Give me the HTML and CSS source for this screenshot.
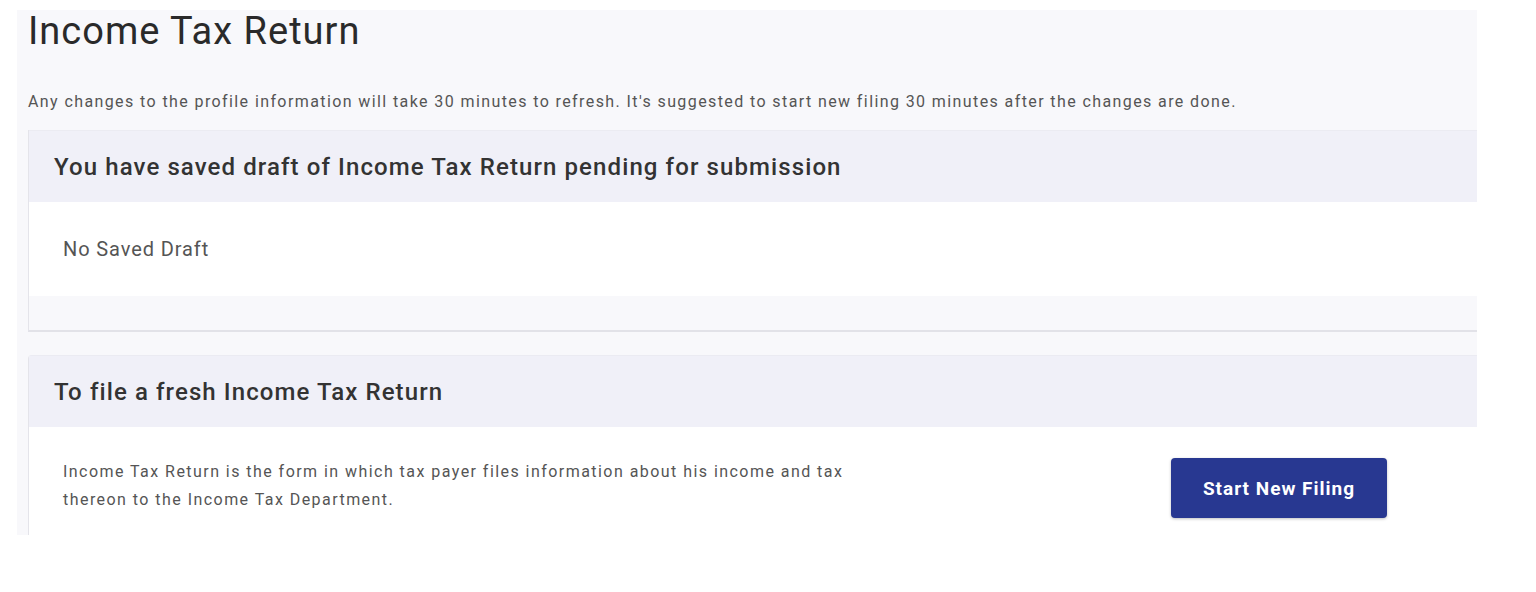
FILE: index.html
```html
<!DOCTYPE html>
<html lang="en">
<head>
<meta charset="utf-8">
<title>Income Tax Return</title>
<link rel="stylesheet" href="styles.css">
</head>
<body>
<div class="page">
  <div class="panel">
    <h1 class="title">Income Tax Return</h1>
    <p class="note">Any changes to the profile information will take 30 minutes to refresh. It's suggested to start new filing 30 minutes after the changes are done.</p>
    <div class="group">
      <section class="card">
        <div class="card-head">You have saved draft of Income Tax Return pending for submission</div>
        <div class="card-body draft">No Saved Draft</div>
      </section>
    </div>
    <section class="card card-fresh">
      <div class="card-head">To file a fresh Income Tax Return</div>
      <div class="card-body fresh">
        <p class="desc">Income Tax Return is the form in which tax payer files information about his income and tax thereon to the Income Tax Department.</p>
        <button class="btn">Start New Filing</button>
      </div>
    </section>
  </div>
</div>
</body>
</html>
```
FILE: styles.css
```css
* { box-sizing: border-box; }
html, body { margin: 0; padding: 0; background: #ffffff; }
body { font-family: Roboto, "Liberation Sans", sans-serif; color: #333; }
.page { padding: 10px 59px 0 17px; height: 592px; }
.panel {
  background: #f8f8fb;
  height: 525px;
  overflow: hidden;
  padding: 0 0 0 11px;
}
.title {
  margin: 0;
  padding-top: 0;
  font-size: 38px;
  letter-spacing: 1px;
  font-weight: 400;
  color: #2a2a2a;
  line-height: 42px;
  height: 42px;
}
.note {
  margin: 41px 0 0 0;
  font-size: 16px;
  letter-spacing: 1.4px;
  line-height: 18px;
  color: #555;
  height: 18px;
  white-space: nowrap;
}
.group {
  margin-top: 19px;
  border-left: 1px solid #e4e4ea;
  border-bottom: 2px solid #e2e2e8;
  height: 202px;
}
.card { background: #fff; }
.card-head {
  background: #f0f0f8;
  height: 72px;
  display: flex;
  align-items: center;
  padding-left: 25px;
  font-size: 24px;
  letter-spacing: 1.1px;
  font-weight: 500;
  color: #333;
  border-top: 1px solid #ebebf2;
}
.card-body { background: #fff; }
.draft {
  height: 94px;
  padding: 35px 0 0 34px;
  font-size: 20px;
  letter-spacing: 0.9px;
  color: #555;
}
.card-fresh {
  margin-top: 23px;
  border-left: 1px solid #e4e4ea;
  border-top-left-radius: 4px;
  overflow: hidden;
}
.fresh {
  display: flex;
  align-items: flex-start;
  padding: 31px 0 0 34px;
  height: 120px;
}
.desc {
  margin: 0;
  width: 800px;
  font-size: 16px;
  letter-spacing: 1.45px;
  line-height: 28px;
  color: #555;
}
.btn {
  margin: 0 0 0 308px;
  width: 216px;
  height: 60px;
  background: #283891;
  color: #fff;
  border: none;
  border-radius: 4px;
  font-family: Roboto, "Liberation Sans", sans-serif;
  font-size: 19px;
  letter-spacing: 1px;
  font-weight: 700;
  box-shadow: 0 1px 3px rgba(0,0,0,0.25);
}
```
